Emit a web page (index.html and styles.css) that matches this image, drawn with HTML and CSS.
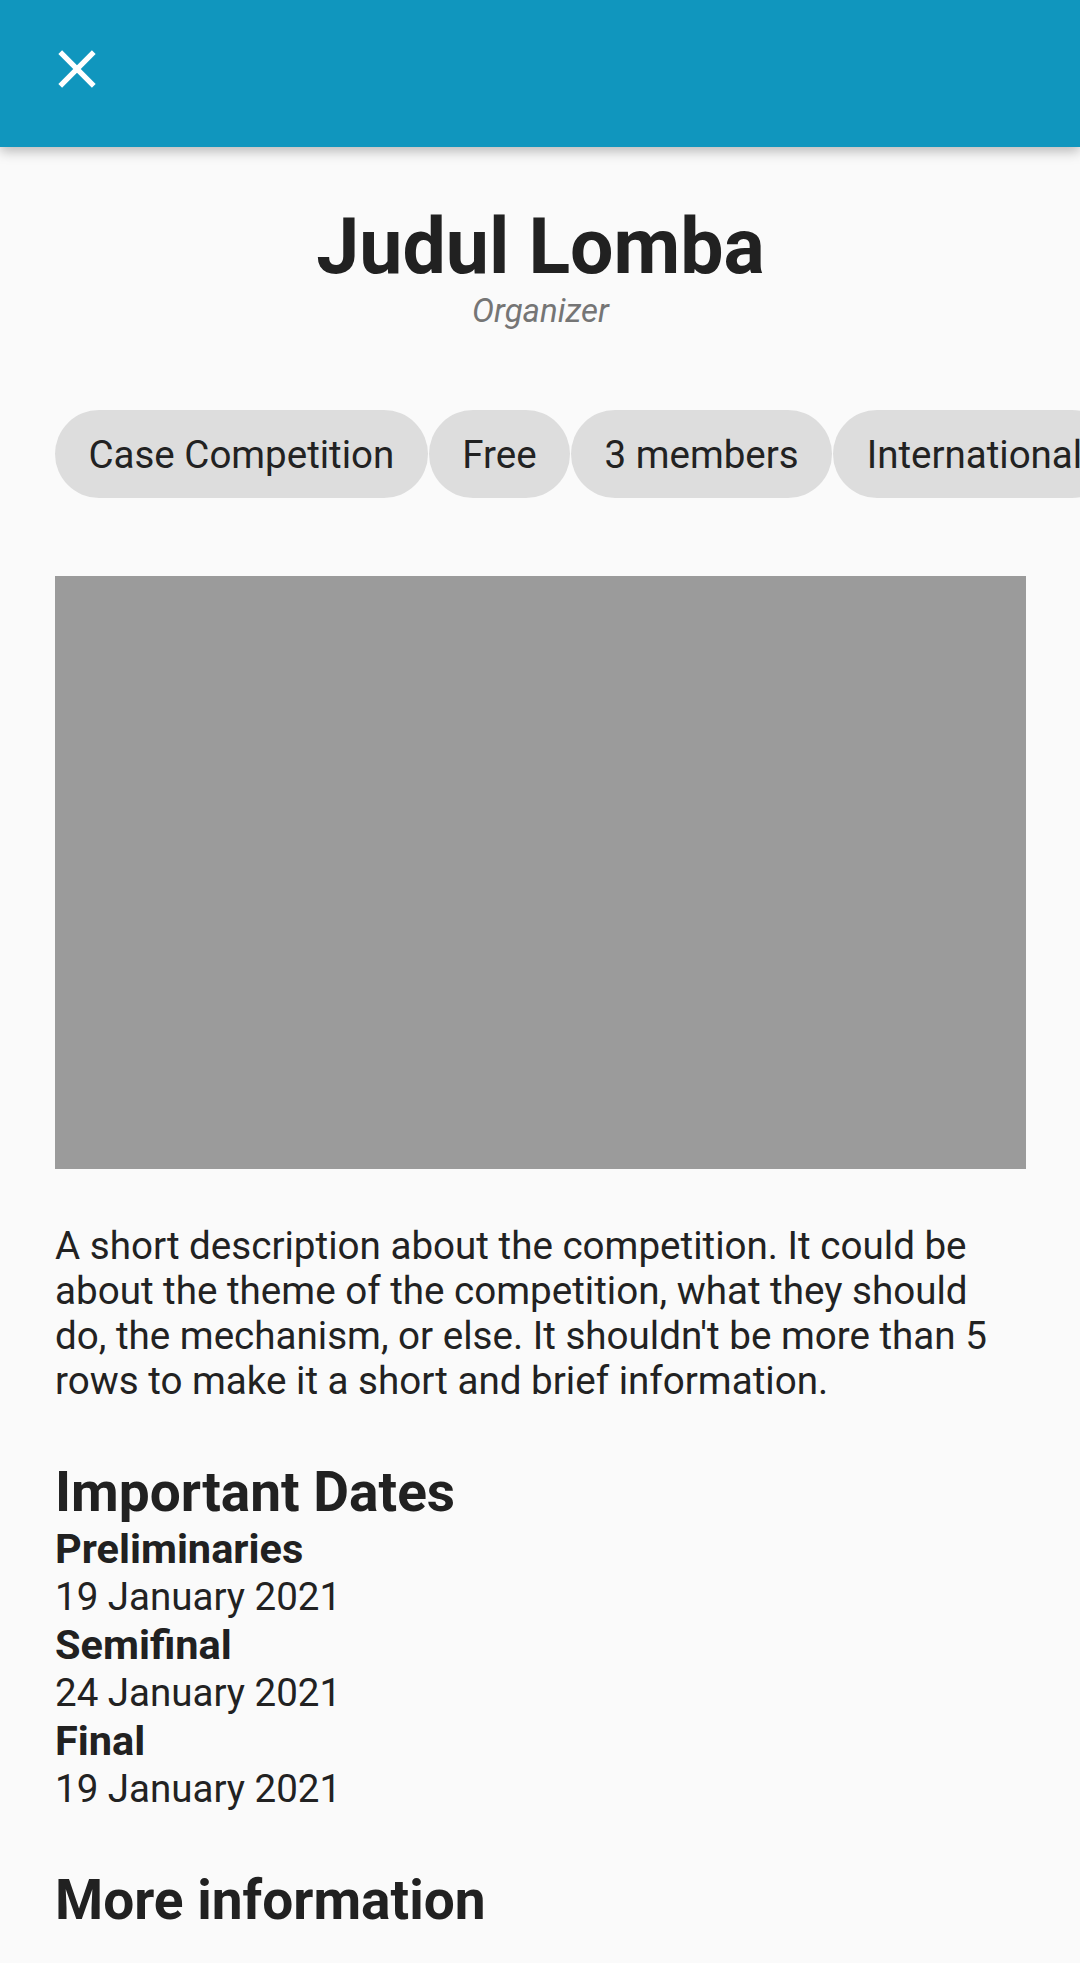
FILE: index.html
```html
<!DOCTYPE html>
<html lang="en">
<head>
<meta charset="utf-8">
<title>Judul Lomba</title>
<link rel="stylesheet" href="styles.css">
</head>
<body>
<header class="appbar">
  <button class="close-btn" aria-label="Close">
    <svg class="close-icon" viewBox="0 0 24 24" width="64" height="64"><path fill="#ffffff" d="M19 6.41L17.59 5 12 10.59 6.41 5 5 6.41 10.59 12 5 17.59 6.41 19 12 13.41 17.59 19 19 17.59 13.41 12z"/></svg>
  </button>
</header>
<main class="content">
  <h1 class="title">Judul Lomba</h1>
  <p class="organizer">Organizer</p>
  <div class="chips">
    <span class="chip">Case Competition</span>
    <span class="chip">Free</span>
    <span class="chip">3 members</span>
    <span class="chip">International</span>
  </div>
  <div class="poster"></div>
  <p class="description">A short description about the competition. It could be about the theme of the competition, what they should do, the mechanism, or else. It shouldn't be more than 5 rows to make it a short and brief information.</p>
  <h2 class="section-title">Important Dates</h2>
  <div class="dates">
    <div class="date-label">Preliminaries</div>
    <div class="date-value">19 January 2021</div>
    <div class="date-label">Semifinal</div>
    <div class="date-value">24 January 2021</div>
    <div class="date-label">Final</div>
    <div class="date-value">19 January 2021</div>
  </div>
  <h2 class="section-title section-more">More information</h2>
</main>
</body>
</html>
```
FILE: styles.css
```css
html, body {
  margin: 0;
  padding: 0;
}
body {
  background: #fafafa;
  font-family: Roboto, "Noto Sans", sans-serif;
  color: #212121;
  width: 1080px;
  min-height: 1963px;
  overflow: hidden;
}
.appbar {
  height: 147px;
  background: #1096be;
  display: flex;
  align-items: center;
  padding: 0 0 9px 45px;
  box-sizing: border-box;
  box-shadow: 0 4px 12px rgba(0, 0, 0, 0.28);
  position: relative;
  z-index: 1;
}
.close-btn {
  background: none;
  border: 0;
  padding: 0;
  margin: 0;
  display: flex;
  cursor: pointer;
}
.close-icon {
  display: block;
}
.content {
  padding: 0 54px 0 55px;
  display: flex;
  flex-direction: column;
}
.title {
  margin: 57px 0 0 0;
  font-size: 77px;
  line-height: 86px;
  font-weight: 700;
  text-align: center;
  color: #212121;
}
.organizer {
  margin: 2px 0 0 0;
  font-size: 33px;
  line-height: 38px;
  font-style: italic;
  text-align: center;
  color: #757575;
}
.chips {
  margin: 80px -54px 0 0;
  display: flex;
  gap: 1px;
  overflow: hidden;
  white-space: nowrap;
}
.chip {
  flex: none;
  height: 88px;
  display: flex;
  align-items: center;
  padding: 0 33.5px;
  border-radius: 44px;
  background: #dddddd;
  font-size: 38.5px;
  color: #222222;
}
.poster {
  margin-top: 78px;
  height: 593px;
  background: #9b9b9b;
}
.description {
  margin: 53.5px 0 0 0;
  font-size: 38.6px;
  line-height: 45px;
  color: #222222;
}
.section-title {
  margin: 56px 0 0 0;
  font-size: 55px;
  line-height: 66px;
  font-weight: 700;
  color: #212121;
}
.dates {
  display: flex;
  flex-direction: column;
}
.date-label {
  font-size: 41.5px;
  line-height: 48px;
  font-weight: 700;
  color: #212121;
}
.date-value {
  font-size: 38.5px;
  line-height: 48px;
  color: #222222;
}
.section-more {
  margin-top: 54px;
}
```
